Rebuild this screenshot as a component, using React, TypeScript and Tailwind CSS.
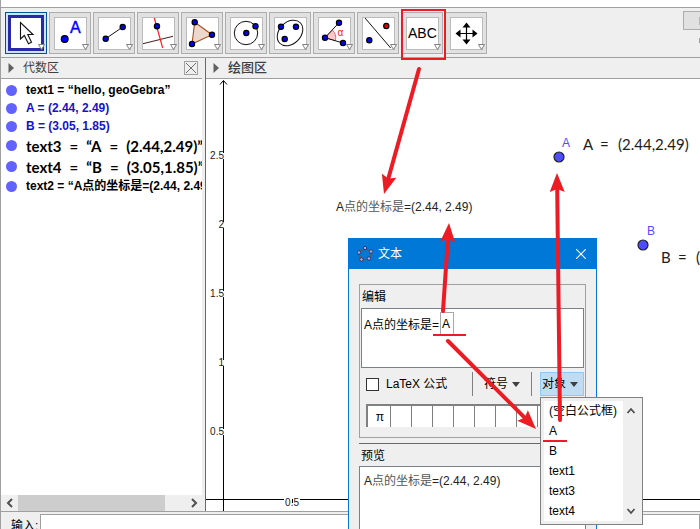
import React from "react";

const INK = "#111111";
const BLUE = "#0000ff";

function Dot({ x, y, fill = BLUE, r = 2.6 }: { x: number; y: number; fill?: string; r?: number }) {
  return <circle cx={x} cy={y} r={r} fill={fill} stroke="#000" strokeWidth="1.2" />;
}

const tools: { name: string; art: React.ReactNode }[] = [
  {
    name: "移动",
    art: (
      <path d="M15.5 10.5V27L19.3 23.5L23.5 31.8L26.5 30.3L22.8 22.5H28Z" fill="#fff" stroke={INK} strokeWidth="1.1" />
    ),
  },
  {
    name: "点",
    art: (
      <>
        <Dot x={15.7} y={27} r={3.4} />
        <text x="21" y="21" fontSize="16" fill={BLUE} stroke={BLUE} strokeWidth="0.4">A</text>
      </>
    ),
  },
  {
    name: "线段",
    art: (
      <>
        <path d="M12.7 26.7L29.7 15" stroke={INK} />
        <Dot x={12.7} y={26.7} />
        <Dot x={29.7} y={15} />
      </>
    ),
  },
  {
    name: "垂线",
    art: (
      <>
        <path d="M6 31.7L36 24.3" stroke="#402020" />
        <path d="M17.3 6L25.7 36" stroke="#ff2020" strokeWidth="1.2" />
        <Dot x={20} y={14.3} />
      </>
    ),
  },
  {
    name: "多边形",
    art: (
      <>
        <path d="M13.7 10.3L31 22.7L11 32Z" fill="#ecd8cc" stroke="#a8501e" strokeWidth="1.1" />
        <Dot x={13.7} y={10.3} />
        <Dot x={31} y={22.7} />
        <Dot x={11} y={32} />
      </>
    ),
  },
  {
    name: "圆",
    art: (
      <>
        <circle cx="21" cy="21" r="11.7" fill="none" stroke={INK} />
        <Dot x={21.3} y={21} />
        <Dot x={30.5} y={14.3} />
      </>
    ),
  },
  {
    name: "椭圆",
    art: (
      <>
        <ellipse cx="21" cy="21" rx="14.5" ry="10.8" transform="rotate(-45 21 21)" fill="none" stroke={INK} />
        <Dot x={12} y={14.7} />
        <Dot x={27} y={14.7} />
        <Dot x={15.7} y={27} />
      </>
    ),
  },
  {
    name: "角度",
    art: (
      <>
        <path d="M12 25.7L19.5 18.2A10.6 10.6 0 0 1 22.3 28.6Z" fill="#ffc8c8" stroke="#e05050" strokeWidth="0.8" />
        <path d="M26 10.7L12 25.7L30 31" fill="none" stroke={INK} />
        <Dot x={12} y={25.7} />
        <Dot x={26} y={10.7} />
        <Dot x={30} y={31} />
        <text x="24.5" y="24" fontSize="10" fill="#ff2020">α</text>
      </>
    ),
  },
  {
    name: "轴对称",
    art: (
      <>
        <path d="M8 6L33.7 36" stroke={INK} />
        <Dot x={29.3} y={14} fill="#e80000" />
        <Dot x={12.3} y={28.3} />
      </>
    ),
  },
  {
    name: "文本",
    art: <text x="7" y="26" fontSize="14" fill="#000">ABC</text>,
  },
  {
    name: "移动视图",
    art: (
      <>
        <path d="M13 21.5H30M21.5 13V30" stroke="#000" strokeWidth="1.2" />
        <path d="M21.5 10.5L25.5 15.5H17.5ZM21.5 32.5L17.5 27.5H25.5ZM10.5 21.5L15.5 17.5V25.5ZM32.5 21.5L27.5 25.5V17.5Z" fill="#000" />
      </>
    ),
  },
];

function ToolButton({ index, name, art }: { index: number; name: string; art: React.ReactNode }) {
  const selected = index === 0;
  return (
    <button
      aria-label={name}
      aria-pressed={selected}
      className={
        selected
          ? "size-[42px] shrink-0 border border-[#005499] bg-[#cce4f7]"
          : "size-[42px] shrink-0 border border-[#adadad] bg-[#e1e1e1]"
      }
    >
      <svg viewBox="1 1 40 40" className="block size-10" fontFamily="'Liberation Sans', Arial, sans-serif">
        {selected ? (
          <rect x="4.5" y="4.5" width="33" height="33" fill="#fff" stroke="#2828a8" strokeWidth="3" />
        ) : (
          <rect x="5.5" y="5.5" width="32" height="32" fill="#fff" stroke="#bbbbbb" />
        )}
        {art}
        <path d="M33.5 32.5H39.5L36.5 37.5Z" fill="#fff" stroke="#808080" />
      </svg>
    </button>
  );
}

function PanelHeader({ title, strong, closable }: { title: string; strong?: boolean; closable?: boolean }) {
  return (
    <div className="flex h-[21px] shrink-0 items-center border-b border-[#a0a0a0] bg-[#efefef] pr-1 pl-[7px] text-[#404040]">
      <svg viewBox="0 0 6 10" className="mr-[9px] h-2.5 w-1.5">
        <path d="M0.5 0L6 5L0.5 10Z" fill="#606060" />
      </svg>
      <h2 className={strong ? "text-[13px] leading-5 font-medium" : "text-xs leading-5"}>{title}</h2>
      {closable && (
        <button aria-label="关闭" className="ml-auto size-3.5 border border-[#a0a0a0]">
          <svg viewBox="0 0 12 12" className="block size-3" stroke="#707070">
            <path d="M1 1L11 11M11 1L1 11" />
          </svg>
        </button>
      )}
    </div>
  );
}

function Row({ children, tall, blue }: { children: React.ReactNode; tall?: boolean; blue?: boolean }) {
  return (
    <li className={tall ? "flex h-[21px] items-center" : "flex h-[18px] items-center"}>
      <span className="mr-[9px] size-[11px] shrink-0 rounded-full bg-[#6262ff]" />
      <span className={blue ? "font-bold whitespace-nowrap text-[#1414c8]" : "font-bold whitespace-nowrap text-black"}>
        {children}
      </span>
    </li>
  );
}

function Formula({ name, label, value }: { name: string; label: string; value: string }) {
  return (
    <span className="flex gap-2 font-['Lato'] text-[15px] leading-5">
      <span>{name}</span>
      <span>=</span>
      <span>“{label}</span>
      <span>=</span>
      <span>{value}”</span>
    </span>
  );
}

function AlgebraPanel() {
  return (
    <section className="flex w-[201px] shrink-0 flex-col bg-white">
      <PanelHeader title="代数区" closable />
      <ul className="flex-1 overflow-hidden pt-0.5 pl-[5px] text-xs leading-[18px]">
        <Row>text1 = “hello, geoGebra”</Row>
        <Row blue>A = (2.44, 2.49)</Row>
        <Row blue>B = (3.05, 1.85)</Row>
        <Row tall>
          <Formula name="text3" label="A" value="(2.44,2.49)" />
        </Row>
        <Row tall>
          <Formula name="text4" label="B" value="(3.05,1.85)" />
        </Row>
        <Row>text2 = “A点的坐标是=(2.44, 2.49)”</Row>
      </ul>
      <div className="flex h-4 shrink-0 items-stretch bg-[#efefef]">
        <button aria-label="向左滚动" className="flex w-[17px] items-center justify-center">
          <svg viewBox="0 0 8 10" className="h-2.5 w-2" fill="none" stroke="#505050" strokeWidth="2">
            <path d="M6 1L2 5L6 9" />
          </svg>
        </button>
        <div className="w-[147px] bg-[#cdcdcd]" />
        <button aria-label="向右滚动" className="ml-auto flex w-[17px] items-center justify-center">
          <svg viewBox="0 0 8 10" className="h-2.5 w-2" fill="none" stroke="#505050" strokeWidth="2">
            <path d="M2 1L6 5L2 9" />
          </svg>
        </button>
      </div>
    </section>
  );
}

const yLabels = [
  { text: "2.5", y: 77 },
  { text: "2", y: 146 },
  { text: "1.5", y: 215 },
  { text: "1", y: 284 },
  { text: "0.5", y: 353 },
];

function GraphicsPanel() {
  return (
    <section className="flex min-w-0 flex-1 flex-col border-l border-[#696969] bg-white">
      <PanelHeader title="绘图区" strong />
      <svg className="min-h-0 w-full flex-1" fontFamily="'Liberation Sans', 'Noto Sans CJK SC', sans-serif">
        <path d="M17.5 2V433M0 420.5H494" stroke="#000" />
        <path d="M14 5.5L17.5 1.5L21 5.5" fill="none" stroke="#000" />
        <g fontSize="10" fill="#202020" textAnchor="end">
          {yLabels.map((l) => (
            <React.Fragment key={l.text}>
              <rect x="16" y={l.y - 3} width="3" height="6" fill="#fff" />
              <text x="18" y={l.y + 3}>{l.text}</text>
            </React.Fragment>
          ))}
          <rect x="78" y="419" width="16" height="3" fill="#fff" />
          <text x="93" y="427">0.5</text>
          <path d="M86.5 420V424" stroke="#000" />
        </g>
        <text x="130" y="132" fontSize="12" fill="#222">
          A<tspan fill="#555">点的坐标是</tspan>=(2.44, 2.49)
        </text>
        <g fill="#4d4dff" fontSize="12">
          <circle cx="353" cy="78" r="5" stroke="#202020" strokeWidth="1.2" />
          <circle cx="437" cy="166" r="5" stroke="#202020" strokeWidth="1.2" />
          <text x="356" y="68">A</text>
          <text x="441" y="156">B</text>
        </g>
        <g fontFamily="Lato, 'Noto Sans', sans-serif" fontSize="15" fill="#202020">
          <text x="377" y="71">A</text>
          <text x="394" y="71">=</text>
          <text x="412" y="71">(2.44,2.49)</text>
          <text x="455" y="184">B</text>
          <text x="472" y="184">=</text>
          <text x="490" y="184">(3.05,1.85)</text>
        </g>
      </svg>
    </section>
  );
}

function Caret() {
  return (
    <svg viewBox="0 0 8 5" className="h-[5px] w-2">
      <path d="M0 0H8L4 5Z" fill="#404040" />
    </svg>
  );
}

const symbols = ["π", "", "", "", "", "", "", "", "", ""];

function TextDialog() {
  return (
    <div
      role="dialog"
      aria-label="文本"
      className="absolute top-[238px] bottom-0 left-[348px] flex w-[249px] flex-col overflow-hidden border border-b-0 border-[#0078d7] bg-[#efefef] text-xs text-black"
    >
      <div className="flex h-[30px] shrink-0 items-center bg-[#0078d7] pr-2.5 pl-2 text-white">
        <svg viewBox="0 0 16 16" className="size-4">
          <path d="M8 2L14.5 6L12 13L4.5 14L1.5 6.5Z" fill="none" stroke="#5a5a5a" strokeWidth="1.4" />
          {[[8, 2], [14, 5.5], [12, 12.5], [4.5, 13.5], [2, 6.5]].map(([x, y]) => (
            <circle key={x} cx={x} cy={y} r="1.7" fill="#a8a8ff" stroke="#202040" strokeWidth="0.7" />
          ))}
        </svg>
        <h3 className="ml-[5px] leading-4">文本</h3>
        <button aria-label="关闭" className="ml-auto">
          <svg viewBox="0 0 10 10" className="size-2.5" stroke="#fff" strokeWidth="1.1">
            <path d="M0 0L10 10M10 0L0 10" />
          </svg>
        </button>
      </div>

      <fieldset className="mx-2.5 mt-[15px] h-[154px] min-w-0 shrink-0 border border-[#a0a0a0] px-px">
        <h4 className="h-[23px] pl-px leading-6">编辑</h4>
        <div className="flex h-[60px] items-start border border-[#7a8088] bg-white py-[3px] pl-0.5">
          <input
            aria-label="编辑"
            defaultValue="A点的坐标是="
            className="h-[23px] w-[76px] leading-4 outline-none"
          />
          <input
            aria-label="对象"
            defaultValue="A"
            className="h-[23px] w-3.5 border border-[#a8a8a8] pl-px leading-4 outline-none"
          />
        </div>
        <div className="flex h-8 items-center pl-[5px]">
          <input
            id="latex"
            type="checkbox"
            className="size-[13px] appearance-none border border-[#333] bg-white"
          />
          <label htmlFor="latex" className="ml-[7px] w-[86px] leading-4">LaTeX 公式</label>
          <span className="h-6 w-px bg-[#808080]" />
          <button className="ml-[11px] flex h-6 w-[47px] items-center gap-1 leading-4">
            符号
            <Caret />
          </button>
          <span className="h-6 w-px bg-[#808080]" />
          <button className="ml-2 flex h-6 w-11 items-center gap-1 border border-[#90c8f6] bg-[#c0dcf3] pl-px leading-4">
            对象
            <Caret />
          </button>
        </div>
        <div className="mt-1 ml-[5px] flex h-[23px] w-[214px] border-t-2 border-l-2 border-[#808080] bg-white pl-0.5">
          {symbols.map((s, i) => (
            <button key={i} aria-label={s || "空白"} className="w-[21px] shrink-0 border-r border-[#808080] leading-4">
              {s}
            </button>
          ))}
        </div>
      </fieldset>

      <section className="mx-2.5 mt-[5px] flex min-h-0 flex-1 flex-col border-t border-[#696969]">
        <h4 className="h-[22px] shrink-0 pl-0.5 leading-6">预览</h4>
        <output className="block flex-1 border border-b-0 border-[#7a8088] bg-white pt-1.5 pl-1 leading-4 text-[#222]">
          A<span className="text-[#555]">点的坐标是</span>=(2.44, 2.49)
        </output>
      </section>
    </div>
  );
}

const objects = ["(空白公式框)", "A", "B", "text1", "text3", "text4"];

function ObjectMenu() {
  return (
    <div className="absolute top-[397px] left-[540px] flex h-[128px] w-[103px] border border-[#808080] bg-[#efefef] p-[3px] text-xs text-black">
      <ul role="menu" className="flex-1 bg-white">
        {objects.map((o) => (
          <li key={o} role="none">
            <button role="menuitem" className="block h-5 w-full pl-[5px] text-left leading-5 whitespace-nowrap">
              {o}
            </button>
          </li>
        ))}
      </ul>
      <div className="flex w-4 flex-col items-center justify-between py-1.5">
        <button aria-label="向上滚动">
          <svg viewBox="0 0 10 7" className="block h-[7px] w-2.5" fill="none" stroke="#505050" strokeWidth="1.8">
            <path d="M1.5 6L5 2L8.5 6" />
          </svg>
        </button>
        <button aria-label="向下滚动">
          <svg viewBox="0 0 10 7" className="block h-[7px] w-2.5" fill="none" stroke="#505050" strokeWidth="1.8">
            <path d="M1.5 1L5 5L8.5 1" />
          </svg>
        </button>
      </div>
    </div>
  );
}

function Arrow({ x1, y1, x2, y2 }: { x1: number; y1: number; x2: number; y2: number }) {
  const len = Math.hypot(x2 - x1, y2 - y1);
  const ux = (x2 - x1) / len;
  const uy = (y2 - y1) / len;
  const at = (back: number, side: number) => `${x2 - ux * back - uy * side},${y2 - uy * back + ux * side}`;
  return (
    <>
      <line x1={x1} y1={y1} x2={x2 - ux * 14} y2={y2 - uy * 14} stroke="#ed1c24" strokeWidth="4" strokeLinecap="round" />
      <polygon points={`${x2},${y2} ${at(19, 7.5)} ${at(16, 0)} ${at(19, -7.5)}`} fill="#ed1c24" />
    </>
  );
}

function Annotations() {
  return (
    <svg className="pointer-events-none absolute inset-0 size-full">
      <rect x="402" y="10" width="43" height="49" fill="none" stroke="#ed1c24" strokeWidth="2" />
      <Arrow x1={419} y1={69} x2={384} y2={194} />
      <Arrow x1={443} y1={311} x2={449} y2={223} />
      <Arrow x1={448} y1={341} x2={536} y2={429} />
      <Arrow x1={560} y1={420} x2={557} y2={173} />
      <path d="M433 335H466M543 441H567" stroke="#ed1c24" strokeWidth="2" />
    </svg>
  );
}

export default function App() {
  return (
    <div className="relative flex h-screen flex-col overflow-hidden border-l border-[#a0a0a0] bg-white font-['Liberation_Sans','Noto_Sans_CJK_SC',sans-serif]">
      <header className="mt-[7px] flex h-[51px] shrink-0 items-start gap-0.5 overflow-hidden border-y border-[#a0a0a0] bg-[#efefef] pt-1 pl-1">
        {tools.map((t, i) => (
          <ToolButton key={t.name} index={i} name={t.name} art={t.art} />
        ))}
        <div className="-mt-px ml-auto flex flex-col items-end gap-2">
          <button
            aria-label="撤销"
            className="flex h-[19px] w-[17px] items-center justify-end border border-r-0 border-[#adadad] bg-[#e1e1e1]"
          >
            <span className="h-2 w-px bg-[#b8b8b8]" />
          </button>
          <span className="h-[5px] w-px bg-[#a0a0a0]" />
        </div>
      </header>
      <main className="flex min-h-0 flex-1">
        <AlgebraPanel />
        <div className="w-[3px] shrink-0 bg-[#efefef]" />
        <GraphicsPanel />
      </main>
      <footer className="flex h-[18px] shrink-0 overflow-hidden border-t border-[#a0a0a0] bg-[#efefef] pt-0.5 text-xs">
        <label htmlFor="command" className="w-[39px] shrink-0 pt-1 pl-2.5 leading-4">
          输入:
        </label>
        <input id="command" className="h-6 min-w-0 flex-1 border border-[#a0a0a0] bg-white px-1 outline-none" />
      </footer>
      <div className="absolute inset-y-0 -left-px w-[700px]">
        <TextDialog />
        <ObjectMenu />
        <Annotations />
      </div>
    </div>
  );
}
